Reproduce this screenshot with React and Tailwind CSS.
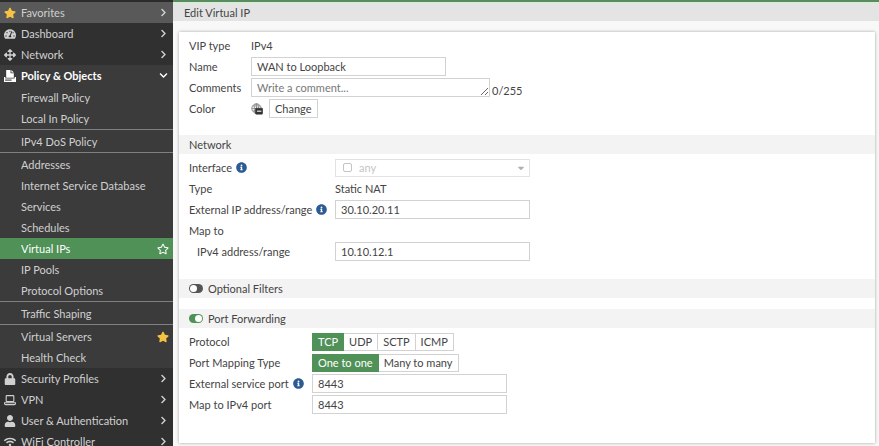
import { useState } from 'react'
import clsx from 'clsx'
import {
  FaArrowsAlt,
  FaCaretDown,
  FaChevronDown,
  FaChevronRight,
  FaInfoCircle,
  FaLock,
  FaRegStar,
  FaStar,
  FaTachometerAlt,
  FaUser,
  FaWifi,
} from 'react-icons/fa'

const PolicyIcon = ({ className }) => (
  <svg viewBox="0 0 22 22" fill="currentColor" className={className} aria-hidden="true">
    <path d="M4 0h8v6h6v8H4z" />
    <path d="M13.500 0 18 4.500h-4.500z" />
    <path d="M0 13h2.500v2.500h17V13H22v9H0z" />
    <path d="M2 18.500h12" stroke="#3b3b3b" strokeWidth="2" />
  </svg>
)

const LaptopIcon = ({ className }) => (
  <svg viewBox="0 0 22 22" fill="none" stroke="currentColor" strokeWidth="2" className={className} aria-hidden="true">
    <rect x="4" y="3" width="14" height="11" rx="1" />
    <path d="M1 16h20v1.500a2 2 0 0 1-2 2H3a2 2 0 0 1-2-2z" />
  </svg>
)

const VipIcon = ({ className }) => (
  <svg viewBox="0 0 22 22" fill="none" stroke="#777" className={className} aria-hidden="true">
    <circle cx="10" cy="10" r="8.500" strokeWidth="1.500" />
    <ellipse cx="10" cy="10" rx="4" ry="8.500" strokeWidth="1.300" />
    <path d="M1.500 10h17M3 5.500h14M3 14.500h8M10 1.500v17" strokeWidth="1.300" />
    <rect x="8" y="9.500" width="13.500" height="11" rx="1.500" fill="#333" stroke="#333" />
    <path d="M11 15h8" stroke="#fff" strokeWidth="2" />
  </svg>
)

const NAV_ITEMS = [
  { label: 'Favorites', icon: FaStar, variant: 'favorites' },
  { label: 'Dashboard', icon: FaTachometerAlt },
  { label: 'Network', icon: FaArrowsAlt },
  {
    label: 'Policy & Objects',
    icon: PolicyIcon,
    groups: [
      ['Firewall Policy', 'Local In Policy'],
      ['IPv4 DoS Policy'],
      ['Addresses', 'Internet Service Database', 'Services', 'Schedules', 'Virtual IPs', 'IP Pools', 'Protocol Options'],
      ['Traffic Shaping'],
      ['Virtual Servers', 'Health Check'],
    ],
  },
  { label: 'Security Profiles', icon: FaLock },
  { label: 'VPN', icon: LaptopIcon },
  { label: 'User & Authentication', icon: FaUser },
  { label: 'WiFi Controller', icon: FaWifi },
]

const ACTIVE_PAGE = 'Virtual IPs'
const STARRED_PAGES = ['Virtual Servers']

const FIELD = 'block h-[19px] border border-[#d2d2d2] bg-white px-[5px] text-[#444] outline-none focus:border-[#4f9157]'

const NavItem = ({ item }) => {
  const Icon = item.icon
  const open = Boolean(item.groups)
  return (
    <a
      href="#"
      className={clsx(
        'flex h-[21px] items-center pr-[5px] pl-1',
        item.variant === 'favorites' && 'bg-[#595959]',
        open && 'bg-[#3b3b3b] font-bold text-white'
      )}
    >
      <Icon
        className={clsx('mr-[5px] h-3 w-3 shrink-0', item.variant === 'favorites' && 'text-[#f5c242]')}
      />
      <span className="flex-1 truncate">{item.label}</span>
      {open ? <FaChevronDown className="h-[9px] w-[9px]" /> : <FaChevronRight className="h-[9px] w-[9px]" />}
    </a>
  )
}

const SubItem = ({ label }) => {
  const active = label === ACTIVE_PAGE
  return (
    <a
      href="#"
      aria-current={active ? 'page' : undefined}
      className={clsx('flex h-[21px] items-center pr-1 pl-[21px]', active && 'bg-[#4f9157] text-white')}
    >
      <span className="flex-1 truncate">{label}</span>
      {active && <FaRegStar className="h-3 w-3" />}
      {STARRED_PAGES.includes(label) && <FaStar className="h-3 w-3 text-[#f5c242]" />}
    </a>
  )
}

const Sidebar = () => (
  <nav className="w-[173px] shrink-0 overflow-hidden border-t-2 border-[#2b2b2b] bg-[#303030] text-[#d0d0d0]">
    {NAV_ITEMS.map((item) => (
      <div key={item.label}>
        <NavItem item={item} />
        {item.groups && (
          <div className="divide-y divide-[#808080] bg-[#3b3b3b]">
            {item.groups.map((group) => (
              <div key={group[0]} className="pt-px">
                {group.map((label) => (
                  <SubItem key={label} label={label} />
                ))}
              </div>
            ))}
          </div>
        )}
      </div>
    ))}
  </nav>
)

const Row = ({ label, htmlFor, info, indent, labelWidth, children }) => {
  const Label = htmlFor ? 'label' : 'span'
  return (
    <div className="flex min-h-[19px] items-center">
      <Label htmlFor={htmlFor} className={clsx('flex shrink-0 items-center gap-1', labelWidth, indent && 'pl-2')}>
        {label}
        {info && <FaInfoCircle className="h-[11px] w-[11px] text-[#2b5b94]" />}
      </Label>
      {children}
    </div>
  )
}

const Toggle = ({ label, checked, onChange }) => (
  <label className="flex items-center gap-[5px]">
    <input type="checkbox" role="switch" checked={checked} onChange={onChange} className="peer sr-only" />
    <span className="flex h-[9px] w-3.5 items-center rounded-full bg-[#555] p-px peer-checked:justify-end peer-checked:bg-[#4f9157]">
      <span className="h-[7px] w-[7px] rounded-full bg-white" />
    </span>
    {label}
  </label>
)

const SectionHeader = ({ children }) => <h2 className="flex h-[19px] items-center bg-[#f3f3f3] px-2.5">{children}</h2>

const Segmented = ({ name, label, options, value, onChange }) => (
  <div role="radiogroup" aria-label={label} className="flex">
    {options.map((option) => (
      <label
        key={option}
        className={clsx(
          'flex h-[18px] items-center border border-l-0 px-[5px] first:border-l',
          value === option ? 'border-[#4f9157] bg-[#4f9157] text-white' : 'border-[#d2d2d2] bg-white'
        )}
      >
        <input
          type="radio"
          name={name}
          checked={value === option}
          onChange={() => onChange(option)}
          className="sr-only"
        />
        {option}
      </label>
    ))}
  </div>
)

const App = () => {
  const [name, setName] = useState('WAN to Loopback')
  const [comments, setComments] = useState('')
  const [externalIp, setExternalIp] = useState('30.10.20.11')
  const [mappedIp, setMappedIp] = useState('10.10.12.1')
  const [optionalFilters, setOptionalFilters] = useState(false)
  const [portForwarding, setPortForwarding] = useState(true)
  const [protocol, setProtocol] = useState('TCP')
  const [mappingType, setMappingType] = useState('One to one')
  const [externalPort, setExternalPort] = useState('8443')
  const [mappedPort, setMappedPort] = useState('8443')

  return (
    <div className="flex h-screen font-['Lato',sans-serif] text-[11px] leading-4 text-[#444]">
      <Sidebar />

      <main className="flex min-w-0 flex-1 flex-col border-t-2 border-[#5a8c60] bg-[#f8f8f8]">
        <h1 className="flex h-[19px] shrink-0 items-center border-t-2 border-[#d9ecdc] bg-[#e4e4e4] px-[11px]">
          Edit Virtual IP
        </h1>

        <form className="mt-[11px] mr-1 mb-[3px] ml-1.5 flex-1 bg-white shadow-[0_0_3px_rgba(0,0,0,0.35)]">
          <div className="space-y-0.5 px-2.5 pt-1 pb-[17px]">
            <Row label="VIP type" labelWidth="w-[62px]">
              <span>IPv4</span>
            </Row>
            <Row label="Name" htmlFor="name" labelWidth="w-[62px]">
              <input id="name" className={clsx(FIELD, 'w-[195px]')} value={name} onChange={(e) => setName(e.target.value)} />
            </Row>
            <Row label="Comments" htmlFor="comments" labelWidth="w-[62px]">
              <textarea
                id="comments"
                rows={1}
                maxLength={255}
                placeholder="Write a comment..."
                className={clsx(FIELD, 'w-[239px] resize overflow-hidden pt-px placeholder:text-[#777]')}
                value={comments}
                onChange={(e) => setComments(e.target.value)}
              />
              <span className="ml-0.5 self-end leading-3">{comments.length}/255</span>
            </Row>
            <Row label="Color" labelWidth="w-[62px]">
              <VipIcon className="h-3 w-3" />
              <button type="button" className="ml-1.5 h-[19px] border border-[#d2d2d2] bg-white px-[5px]">
                Change
              </button>
            </Row>
          </div>

          <SectionHeader>Network</SectionHeader>
          <div className="space-y-0.5 px-2.5 pt-1 pb-[18px]">
            <Row label="Interface" htmlFor="interface" info labelWidth="w-[146px]">
              <div className="relative text-[#c4c4c4]">
                <select
                  id="interface"
                  disabled
                  className="block h-[18px] w-[195px] appearance-none border border-[#e2e2e2] bg-white pl-[23px]"
                >
                  <option>any</option>
                </select>
                <span className="pointer-events-none absolute top-1 left-2 h-[9px] w-[9px] rounded-xs border border-[#c4c4c4]" />
                <FaCaretDown className="pointer-events-none absolute top-1 right-1 h-2.5 w-2.5 text-[#b0b0b0]" />
              </div>
            </Row>
            <Row label="Type" labelWidth="w-[146px]">
              <span>Static NAT</span>
            </Row>
            <Row label="External IP address/range" htmlFor="external-ip" info labelWidth="w-[146px]">
              <input
                id="external-ip"
                className={clsx(FIELD, 'w-[195px]')}
                value={externalIp}
                onChange={(e) => setExternalIp(e.target.value)}
              />
            </Row>
            <Row label="Map to" labelWidth="w-[146px]" />
            <Row label="IPv4 address/range" htmlFor="mapped-ip" indent labelWidth="w-[146px]">
              <input
                id="mapped-ip"
                className={clsx(FIELD, 'w-[195px]')}
                value={mappedIp}
                onChange={(e) => setMappedIp(e.target.value)}
              />
            </Row>
          </div>

          <div className="space-y-[11px]">
            <SectionHeader>
              <Toggle
                label="Optional Filters"
                checked={optionalFilters}
                onChange={() => setOptionalFilters(!optionalFilters)}
              />
            </SectionHeader>
            <SectionHeader>
              <Toggle
                label="Port Forwarding"
                checked={portForwarding}
                onChange={() => setPortForwarding(!portForwarding)}
              />
            </SectionHeader>
          </div>
          {portForwarding && (
            <div className="space-y-0.5 px-2.5 pt-1">
              <Row label="Protocol" labelWidth="w-[123px]">
                <Segmented
                  name="protocol"
                  label="Protocol"
                  options={['TCP', 'UDP', 'SCTP', 'ICMP']}
                  value={protocol}
                  onChange={setProtocol}
                />
              </Row>
              <Row label="Port Mapping Type" labelWidth="w-[123px]">
                <Segmented
                  name="mapping-type"
                  label="Port Mapping Type"
                  options={['One to one', 'Many to many']}
                  value={mappingType}
                  onChange={setMappingType}
                />
              </Row>
              <Row label="External service port" htmlFor="external-port" info labelWidth="w-[123px]">
                <input
                  id="external-port"
                  className={clsx(FIELD, 'w-[195px]')}
                  value={externalPort}
                  onChange={(e) => setExternalPort(e.target.value)}
                />
              </Row>
              <Row label="Map to IPv4 port" htmlFor="mapped-port" labelWidth="w-[123px]">
                <input
                  id="mapped-port"
                  className={clsx(FIELD, 'w-[195px]')}
                  value={mappedPort}
                  onChange={(e) => setMappedPort(e.target.value)}
                />
              </Row>
            </div>
          )}
        </form>
      </main>
    </div>
  )
}

export default App
